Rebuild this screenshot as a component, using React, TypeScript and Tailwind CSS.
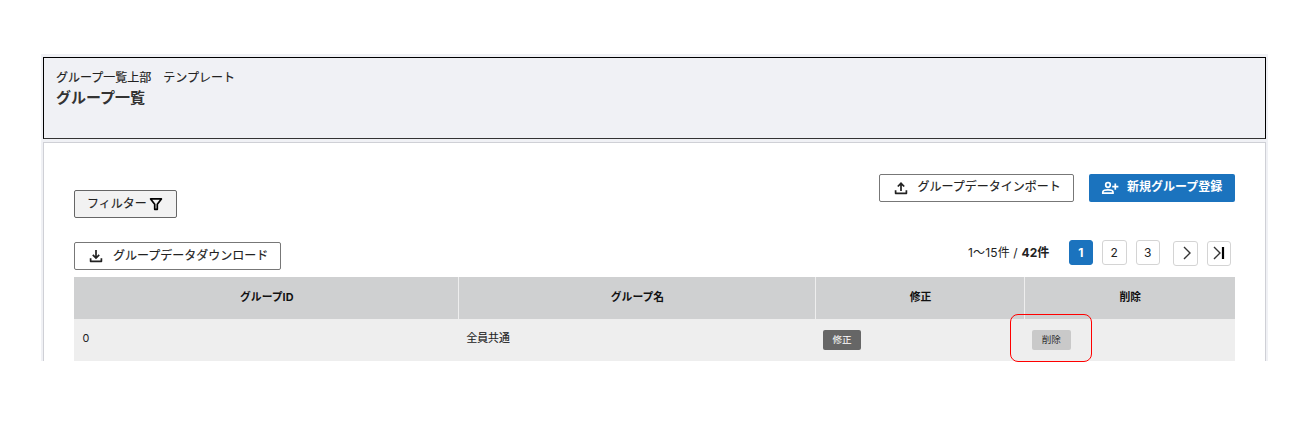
import type { ReactNode } from "react";
import clsx from "clsx";

type Group = {
  id: number;
  name: string;
};

const groups: Group[] = [{ id: 0, name: "全員共通" }];

export default function App() {
  return (
    <div className="h-[421px] w-[1303px] bg-white pt-[54px] pl-[41px] font-['Inter','Noto_Sans_CJK_JP',sans-serif] text-[#222]">
      <div className="flex h-[307px] w-[1227px] flex-col overflow-clip bg-[#f0f1f5] px-0.5 pt-[3px] [overflow-clip-margin:2px]">
        {/* ページタイトル */}
        <header className="h-[82px] shrink-0 border border-black border-b-[#333] pt-[11px] pl-3">
          <p className="text-[12px] leading-[18px] [-webkit-text-stroke:0.15px]">
            グループ一覧上部　テンプレート
          </p>
          <h1 className="text-[15px] leading-[22px] font-bold text-[#333]">グループ一覧</h1>
        </header>

        <main className="mt-[3px] flex-1 border border-b-0 border-[#cfd0d6] bg-white pr-[30px] pl-[30px]">
          {/* 操作ボタン */}
          <div className="flex h-[75px] justify-between">
            <button className="mt-[47px] flex h-7 w-[103px] items-center rounded-xs border border-[#666] bg-[#f2f2f2] pl-3 text-[12px] [-webkit-text-stroke:0.15px]">
              フィルター
              <FilterIcon />
            </button>
            <div className="mt-[31px] flex gap-[15px]">
              <OutlineButton className="w-[195.5px]" icon={<TrayIcon arrow="M9 12V4.5M5.8 7.5L9 4.3l3.2 3.2" />}>
                グループデータインポート
              </OutlineButton>
              <button className="flex h-7 w-[146px] items-center rounded-xs bg-[#1b73be] pl-3 text-[12px] font-bold text-white">
                <PersonAddIcon />
                <span className="-mt-[3px] ml-2">新規グループ登録</span>
              </button>
            </div>
          </div>

          {/* ダウンロード・ページャー */}
          <div className="flex h-[59px] justify-between">
            <div className="pt-6">
              <OutlineButton
                className="w-[206.5px]"
                icon={<TrayIcon arrow="M9 3v7.7M5.8 7.8L9 11l3.2-3.2" />}
                low
              >
                グループデータダウンロード
              </OutlineButton>
            </div>
            <div className="mt-[22px] flex h-[25px] items-center pr-1 text-[12px]">
              <span className="mr-[19px] tracking-[0.15px]">
                1～15件 / <b>42件</b>
              </span>
              <div className="flex gap-[9px]">
                <PageButton active>1</PageButton>
                <PageButton>2</PageButton>
                <PageButton>3</PageButton>
              </div>
              <div className="mt-px ml-[13px] flex gap-[9px]">
                <PageButton>
                  <svg viewBox="0 0 24 24" className="size-6 shrink-0" fill="none" stroke="#333" strokeWidth="1.4">
                    <path d="M11 6l6 6-6 6" />
                  </svg>
                </PageButton>
                <PageButton>
                  <svg viewBox="0 0 24 24" className="size-6 shrink-0" fill="none" stroke="#333" strokeWidth="1.4">
                    <path d="M7 6l6 6-6 6" />
                    <path d="M16 6v12" stroke="#000" strokeWidth="2.2" />
                  </svg>
                </PageButton>
              </div>
            </div>
          </div>

          {/* 一覧テーブル */}
          <table className="w-[1161px] table-fixed border-collapse text-[10.8px]">
            <colgroup>
              <col className="w-[384px]" />
              <col className="w-[357px]" />
              <col className="w-[209px]" />
              <col className="w-[211px]" />
            </colgroup>
            <thead>
              <tr className="h-[42px] bg-[#cfd0d1] text-[#111]">
                <HeadCell>グループID</HeadCell>
                <HeadCell>グループ名</HeadCell>
                <HeadCell>修正</HeadCell>
                <HeadCell last>削除</HeadCell>
              </tr>
            </thead>
            <tbody>
              {groups.map((group) => (
                <tr key={group.id} className="h-[42px] bg-[#eee]">
                  <td className="pb-0.5 pl-[8.5px]">{group.id}</td>
                  <td className="pb-0.5 pl-[8.5px] [-webkit-text-stroke:0.15px]">{group.name}</td>
                  <td className="pl-2">
                    <button className="block h-5 w-[38px] rounded-xs bg-[#666] text-[9.6px] leading-5 text-white">
                      修正
                    </button>
                  </td>
                  <td className="relative pl-2">
                    <button className="block h-5 w-[38.5px] rounded-xs bg-[#c9c9c9] text-[9.6px] leading-5 text-[#333]">
                      削除
                    </button>
                    <span className="absolute -top-[5px] -left-3.5 h-12 w-[82px] rounded-lg border border-[#ff0000]" />
                  </td>
                </tr>
              ))}
            </tbody>
          </table>
        </main>
      </div>
    </div>
  );
}

function FilterIcon() {
  return (
    <svg viewBox="0 0 14 14" className="ml-0.5 size-3.5 shrink-0" fill="none" stroke="#000" strokeWidth="1.7">
      <path d="M1.6 1.9h10.8L8.3 7.3v5H5.7v-5z" strokeLinejoin="round" />
    </svg>
  );
}

/* トレイ+矢印（アップロード/ダウンロード共通） */
function TrayIcon({ arrow }: { arrow: string }) {
  return (
    <svg viewBox="0 0 18 18" className="size-[18px] shrink-0" fill="none" stroke="#222" strokeWidth="1.7">
      <path d={arrow} />
      <path d="M3.6 11.3v3h10.8v-3" strokeLinejoin="round" />
    </svg>
  );
}

function PersonAddIcon() {
  return (
    <svg viewBox="0 0 18 14" className="h-3.5 w-[18px] shrink-0" fill="none" stroke="currentColor" strokeWidth="1.7">
      <circle cx="7" cy="4" r="2.3" />
      <path d="M1.8 12.2v-1.3c0-1.3 2.8-2.1 5.1-2.1s5.1.8 5.1 2.1v1.3z" />
      <path d="M14.3 2.6v6.2M11.2 5.7h6.2" />
    </svg>
  );
}

function OutlineButton({
  icon,
  className,
  low,
  children,
}: {
  icon: ReactNode;
  className: string;
  low?: boolean;
  children: ReactNode;
}) {
  return (
    <button
      className={clsx(
        "flex h-7 items-center rounded-xs border border-[#777] bg-white pl-3 text-[12px] text-[#222] [-webkit-text-stroke:0.15px]",
        className
      )}
    >
      {icon}
      <span className={clsx("ml-2", low ? "-mt-px" : "-mt-[3px]")}>{children}</span>
    </button>
  );
}

function PageButton({ active, children }: { active?: boolean; children: ReactNode }) {
  return (
    <span
      className={clsx(
        "flex h-[25px] w-[24.5px] items-center justify-center rounded-[3px] border",
        active ? "border-[#1b73be] bg-[#1b73be] font-bold text-white" : "border-[#d4d4d4] bg-white"
      )}
    >
      {children}
    </span>
  );
}

function HeadCell({ last, children }: { last?: boolean; children: ReactNode }) {
  return (
    <th className={clsx("text-center font-bold", last ? "pl-px" : "border-r border-[#eee] pl-0.5")}>
      {children}
    </th>
  );
}
